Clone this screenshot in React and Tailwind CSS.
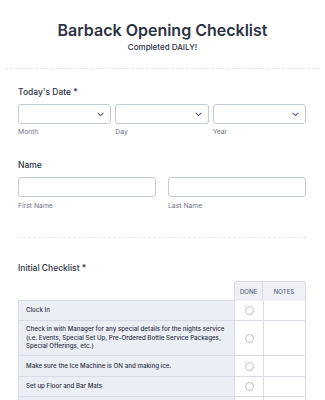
const rows = [
  { label: 'Clock In', h: 'h-[20px]' },
  {
    label:
      'Check in with Manager for any special details for the nights service (i.e. Events, Special Set Up, Pre-Ordered Bottle Service Packages, Special Offerings, etc.)',
    h: 'h-[35px]',
  },
  { label: 'Make sure the Ice Machine is ON and making ice.', h: 'h-[21px]' },
  { label: 'Set up Floor and Bar Mats', h: 'h-[20px]' },
  { label: '', h: 'h-[20px]' },
];

const Chevron = () => (
  <svg width="7" height="5" viewBox="0 0 7 5" fill="none">
    <path d="M1 1.2L3.5 3.6L6 1.2" stroke="#57647e" strokeWidth="1.1" strokeLinecap="round" strokeLinejoin="round" />
  </svg>
);

const DateSelect = ({ label }) => (
  <div className="flex-1">
    <div className="h-[20px] rounded-[3px] border border-[#c3cad8] bg-white flex items-center justify-end pr-[6px]">
      <Chevron />
    </div>
    <div className="mt-[4px] text-[6.8px] leading-[8px] text-[#6f7585]">{label}</div>
  </div>
);

const TextInput = ({ label }) => (
  <div className="flex-1">
    <div className="h-[20px] rounded-[3px] border border-[#c3cad8] bg-white" />
    <div className="mt-[5px] text-[6.8px] leading-[8px] text-[#6f7585]">{label}</div>
  </div>
);

export default function App() {
  return (
    <div className="w-[325px] h-[400px] overflow-hidden bg-white text-[#2c3345]" style={{ fontFamily: 'Inter, "Noto Sans", sans-serif' }}>
      <div className="pt-[20px] text-center">
        <h1 className="text-[16px] leading-[20px] font-semibold">Barback Opening Checklist</h1>
        <p className="mt-[2px] text-[8px] leading-[11px] font-medium">Completed DAILY!</p>
      </div>
      <div className="mx-[5px] mt-[15px] border-t border-dashed border-[#e3e7f0]" />

      <div className="px-[18px] pr-[19px]">
        <div className="mt-[18px] text-[8.5px] leading-[10px] font-medium">Today's Date *</div>
        <div className="mt-[7px] flex gap-[4px]">
          <DateSelect label="Month" />
          <DateSelect label="Day" />
          <DateSelect label="Year" />
        </div>

        <div className="mt-[24px] text-[8.5px] leading-[10px] font-medium">Name</div>
        <div className="mt-[7px] flex gap-[12px]">
          <TextInput label="First Name" />
          <TextInput label="Last Name" />
        </div>

        <div className="mt-[27px] border-t border-dashed border-[#e3e7f0]" />

        <div className="mt-[25px] text-[8.5px] leading-[10px] font-medium">Initial Checklist *</div>

        <div className="mt-[8px]">
          <div className="flex h-[20px]">
            <div className="flex-1 border-b border-[#d8dce8]" />
            <div className="w-[29px] flex items-center justify-center bg-[#eef0f6] border border-b-0 border-[#d8dce8] rounded-tl-[3px] text-[6px] font-medium text-[#57647e]">
              DONE
            </div>
            <div className="w-[43px] flex items-center justify-center bg-[#eef0f6] border border-l-0 border-b-0 border-[#d8dce8] rounded-tr-[3px] text-[6px] font-medium text-[#57647e]">
              NOTES
            </div>
          </div>
          <div className="border-l border-[#d8dce8]">
            {rows.map((r, i) => (
              <div key={i} className={`flex ${r.h} border-b border-[#d8dce8]`}>
                <div className="flex-1 flex items-center bg-[#eceef5] pl-[7px] pr-[5px] text-[6.2px] leading-[8.5px] font-medium text-[#2c3345]">
                  {r.label}
                </div>
                <div className="w-[29px] flex items-center justify-center border-l border-[#d8dce8] bg-white">
                  {r.label && <div className="w-[9px] h-[9px] rounded-full border border-[#b8bfcf]" />}
                </div>
                <div className="w-[43px] border-l border-r border-[#d8dce8] bg-white" />
              </div>
            ))}
          </div>
        </div>
      </div>
    </div>
  );
}
